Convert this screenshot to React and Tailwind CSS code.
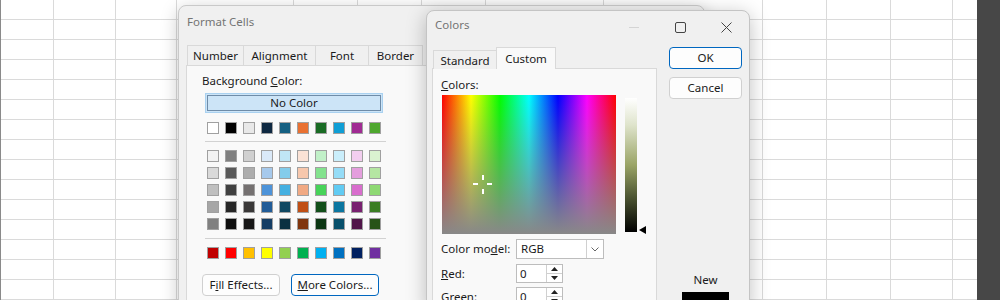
import React from 'react';

const COLS = [53, 62, 61, 117, 64, 64, 64, 118, 159, 64, 64, 62];

const TOP_ROW = ['#ffffff', '#000000', '#e8e8e8', '#0e2841', '#156082', '#e97132', '#196b24', '#0f9ed5', '#a02b93', '#4ea72e'];

const THEME = [
  ['#f2f2f2', '#7f7f7f', '#d0d0d0', '#dae9f8', '#c0e6f5', '#fbe2d5', '#c1f0c8', '#caeefb', '#f2ceef', '#daf2d0'],
  ['#d9d9d9', '#595959', '#adadad', '#a6c9ec', '#83cceb', '#f7c7ac', '#83e28e', '#95dcf7', '#e49edd', '#b5e6a2'],
  ['#bfbfbf', '#404040', '#757171', '#4d93d9', '#45b0e1', '#f1a983', '#47d359', '#61cbf3', '#d86dcd', '#8ed973'],
  ['#a6a6a6', '#262626', '#3a3838', '#215c98', '#104862', '#c04f15', '#124f1a', '#0b76a0', '#782070', '#3a7d22'],
  ['#808080', '#0d0d0d', '#171616', '#153d64', '#0a3041', '#80350e', '#0b3512', '#074f6a', '#501549', '#275317'],
];

const STANDARD = ['#c00000', '#ff0000', '#ffc000', '#ffff00', '#92d050', '#00b050', '#00b0f0', '#0070c0', '#002060', '#7030a0'];

function Sheet() {
  return (
    <div className="flex h-[300px] w-[1000px] bg-white">
      <div className="flex-1 border-l border-[#8a8a8a]">
        {Array.from({ length: 15 }).map((_, r) => (
          <div key={r} className="flex h-5 border-b border-[#dadada]">
            {COLS.map((w, c) => (
              <div key={c} className="h-full border-r border-[#dadada]" style={{ width: w }} />
            ))}
          </div>
        ))}
      </div>
      <div className="w-[23px] bg-[#474747]" />
    </div>
  );
}

function Swatch({ color }) {
  return <div className="h-3 w-3 border border-[#a0a0a0]" style={{ background: color }} />;
}

function SwatchRow({ colors }) {
  return (
    <div className="ml-[20px] flex gap-[6px]">
      {colors.map((c, i) => (
        <Swatch key={i} color={c} />
      ))}
    </div>
  );
}

function Tab({ label, width, first }) {
  return (
    <div
      className={`flex h-5 items-center justify-center whitespace-nowrap border border-b-0 border-[#d9d9d9] bg-[#f0f0f0] text-[#1a1a1a] ${first ? '' : '-ml-px'}`}
      style={{ width }}
    >
      {label}
    </div>
  );
}

function FormatCells() {
  return (
    <div className="absolute left-[178px] top-[5px] h-[310px] w-[527px] rounded-t-[8px] border border-[#c9c9c9] bg-[#f0f0f0] shadow-[0_4px_18px_rgba(0,0,0,0.22)]">
      {/* title bar */}
      <div className="h-[39px] pl-[8px] pt-[8px] leading-4 text-[#747474]">Format Cells</div>

      {/* tabs (the rest sit under the Colors window) */}
      <div className="ml-[8px] flex">
        <Tab label="Number" width={57} first />
        <Tab label="Alignment" width={73} />
        <Tab label="Font" width={54} />
        <Tab label="Border" width={55} />
      </div>

      {/* panel */}
      <div className="ml-[7px] h-[250px] w-[511px] border border-[#d9d9d9] bg-[#f9f9f9] pt-[7px] text-[#1a1a1a]">
        <div className="whitespace-nowrap pl-[15px] leading-4">
          Background <span className="underline">C</span>olor:
        </div>

        <div className="ml-[18px] mt-1 h-5 w-[178px] border border-[#a9d1f0] bg-[#cce4f7] p-[1px]">
          <div className="flex h-full items-center justify-center border border-[#6f8ca8] leading-4">No Color</div>
        </div>

        <div className="mt-[9px]">
          <SwatchRow colors={TOP_ROW} />
        </div>

        <div className="ml-[18px] mt-[7px] h-px w-[181px] bg-[#d2d2d2]" />

        <div className="mt-2 flex flex-col gap-[5px]">
          {THEME.map((row, i) => (
            <SwatchRow key={i} colors={row} />
          ))}
        </div>

        <div className="ml-[18px] mt-2 h-px w-[181px] bg-[#d2d2d2]" />

        <div className="mt-2">
          <SwatchRow colors={STANDARD} />
        </div>

        <div className="ml-[15px] mt-[15px] flex gap-[11px]">
          <button className="flex h-[22px] w-[78px] items-center justify-center whitespace-nowrap rounded-[4px] border border-[#d0d0d0] bg-[#fdfdfd] leading-4">
            F<span className="underline">i</span>ll Effects...
          </button>
          <button className="flex h-[22px] w-[88px] items-center justify-center whitespace-nowrap rounded-[4px] border border-[#0067c0] bg-[#fdfdfd] leading-4">
            <span className="underline">M</span>ore Colors...
          </button>
        </div>
      </div>
    </div>
  );
}

function Spin() {
  return (
    <div className="flex h-full w-[16px] flex-col border-l border-[#d0d0d0]">
      <div className="flex flex-1 items-center justify-center border-b border-[#d0d0d0]">
        <svg width="7" height="4" viewBox="0 0 7 4">
          <polygon points="3.5,0 7,4 0,4" fill="#222" />
        </svg>
      </div>
      <div className="flex flex-1 items-center justify-center">
        <svg width="7" height="4" viewBox="0 0 7 4">
          <polygon points="0,0 7,0 3.5,4" fill="#222" />
        </svg>
      </div>
    </div>
  );
}

function NumField({ label, value, mt }) {
  return (
    <div className={`flex items-center ${mt}`}>
      <div className="w-[83px] shrink-0 whitespace-nowrap pl-[8px] leading-4">{label}</div>
      <div className="flex h-[19px] w-[47px] items-center border border-[#bdbdbd] bg-white">
        <div className="flex-1 pl-[3px] leading-4">{value}</div>
        <Spin />
      </div>
    </div>
  );
}

function Colors() {
  return (
    <div className="absolute left-[426px] top-[10px] h-[300px] w-[324px] rounded-t-[8px] border border-[#c4c4c4] bg-[#f0f0f0] text-[#1a1a1a] shadow-[0_4px_20px_rgba(0,0,0,0.25)]">
      {/* title bar */}
      <div className="flex h-9">
        <div className="pl-[8px] pt-[6px] leading-4 text-[#747474]">Colors</div>
        <div className="ml-auto flex">
          <div className="flex w-[46px] items-center justify-center pb-[4px]">
            <div className="h-px w-[10px] bg-[#d4d4d4]" />
          </div>
          <div className="flex w-[46px] items-center justify-center pb-[4px]">
            <svg width="11" height="11" viewBox="0 0 11 11">
              <rect x="0.5" y="0.5" width="10" height="10" rx="1.5" fill="none" stroke="#444" strokeWidth="1" />
            </svg>
          </div>
          <div className="flex w-[46px] items-center justify-center pb-[4px]">
            <svg width="11" height="11" viewBox="0 0 11 11">
              <path d="M0.5 0.5 L10.5 10.5 M10.5 0.5 L0.5 10.5" stroke="#444" strokeWidth="1" />
            </svg>
          </div>
        </div>
      </div>

      <div className="flex">
        {/* left part */}
        <div className="w-[230px]">
          <div className="relative z-10 -mb-px ml-[6px] flex h-[22px] items-end">
            <div className="flex h-[19px] w-[64px] items-center justify-center whitespace-nowrap border border-b-0 border-[#d9d9d9] bg-[#f0f0f0] pt-[1px]">
              Standard
            </div>
            <div className="-ml-px flex h-[22px] w-[60px] items-center justify-center whitespace-nowrap border border-b-0 border-[#d9d9d9] bg-[#f9f9f9]">
              Custom
            </div>
          </div>

          <div className="ml-[5px] h-[240px] w-[225px] border border-[#d9d9d9] bg-[#f9f9f9] pt-2">
            <div className="pl-[8px] leading-4">
              <span className="underline">C</span>olors:
            </div>

            <div className="mt-[2px] flex">
              <div className="relative ml-[9px] h-[139px] w-[174px] bg-[linear-gradient(to_bottom,rgba(136,136,136,0),#888888),linear-gradient(to_right,#ff0000,#ffff00,#00ff00,#00ffff,#0000ff,#ff00ff,#ff0000)]">
                <div className="absolute left-[40px] top-[80px] h-[5px] w-[2px] bg-white" />
                <div className="absolute left-[40px] top-[94px] h-[5px] w-[2px] bg-white" />
                <div className="absolute left-[31px] top-[88px] h-[2px] w-[5px] bg-white" />
                <div className="absolute left-[45px] top-[88px] h-[2px] w-[5px] bg-white" />
              </div>
              <div className="ml-[9px] mt-[3px] h-[134px] w-[12px] bg-[linear-gradient(to_bottom,#ffffff,#dfe4cc_20%,#9aa466_50%,#4a5230_75%,#000000)]" />
              <div className="ml-[2px] mt-[131px]">
                <svg width="7" height="8" viewBox="0 0 7 8">
                  <polygon points="0,4 7,0 7,8" fill="#000" />
                </svg>
              </div>
            </div>

            <div className="mt-[5px] flex items-center">
              <div className="w-[83px] shrink-0 whitespace-nowrap pl-[8px] leading-4">
                Color mo<span className="underline">d</span>el:
              </div>
              <div className="flex h-5 w-[88px] items-center border border-[#bdbdbd] bg-white">
                <div className="flex-1 pl-[4px] leading-4">RGB</div>
                <div className="flex h-full w-[17px] items-center justify-center border-l border-[#d0d0d0]">
                  <svg width="8" height="5" viewBox="0 0 8 5">
                    <path d="M0.5 0.5 L4 4 L7.5 0.5" fill="none" stroke="#666" strokeWidth="1" />
                  </svg>
                </div>
              </div>
            </div>

            <NumField
              mt="mt-[5px]"
              value="0"
              label={
                <>
                  <span className="underline">R</span>ed:
                </>
              }
            />
            <NumField
              mt="mt-[4px]"
              value="0"
              label={
                <>
                  <span className="underline">G</span>reen:
                </>
              }
            />
          </div>
        </div>

        {/* right column */}
        <div className="ml-[12px] flex w-[73px] flex-col items-center">
          <button className="flex h-[22px] w-[73px] items-center justify-center rounded-[4px] border border-[#0067c0] bg-[#fdfdfd] leading-4">
            OK
          </button>
          <button className="mt-2 flex h-[22px] w-[73px] items-center justify-center rounded-[4px] border border-[#d0d0d0] bg-[#fdfdfd] leading-4">
            Cancel
          </button>
          <div className="mt-[173px] leading-4">New</div>
          <div className="mt-1 h-5 w-[47px] bg-black" />
        </div>
      </div>
    </div>
  );
}

export default function App() {
  return (
    <div className="relative h-[300px] w-[1000px] overflow-hidden font-['Noto_Sans',sans-serif] text-[11.5px]">
      <Sheet />
      <FormatCells />
      <Colors />
    </div>
  );
}
